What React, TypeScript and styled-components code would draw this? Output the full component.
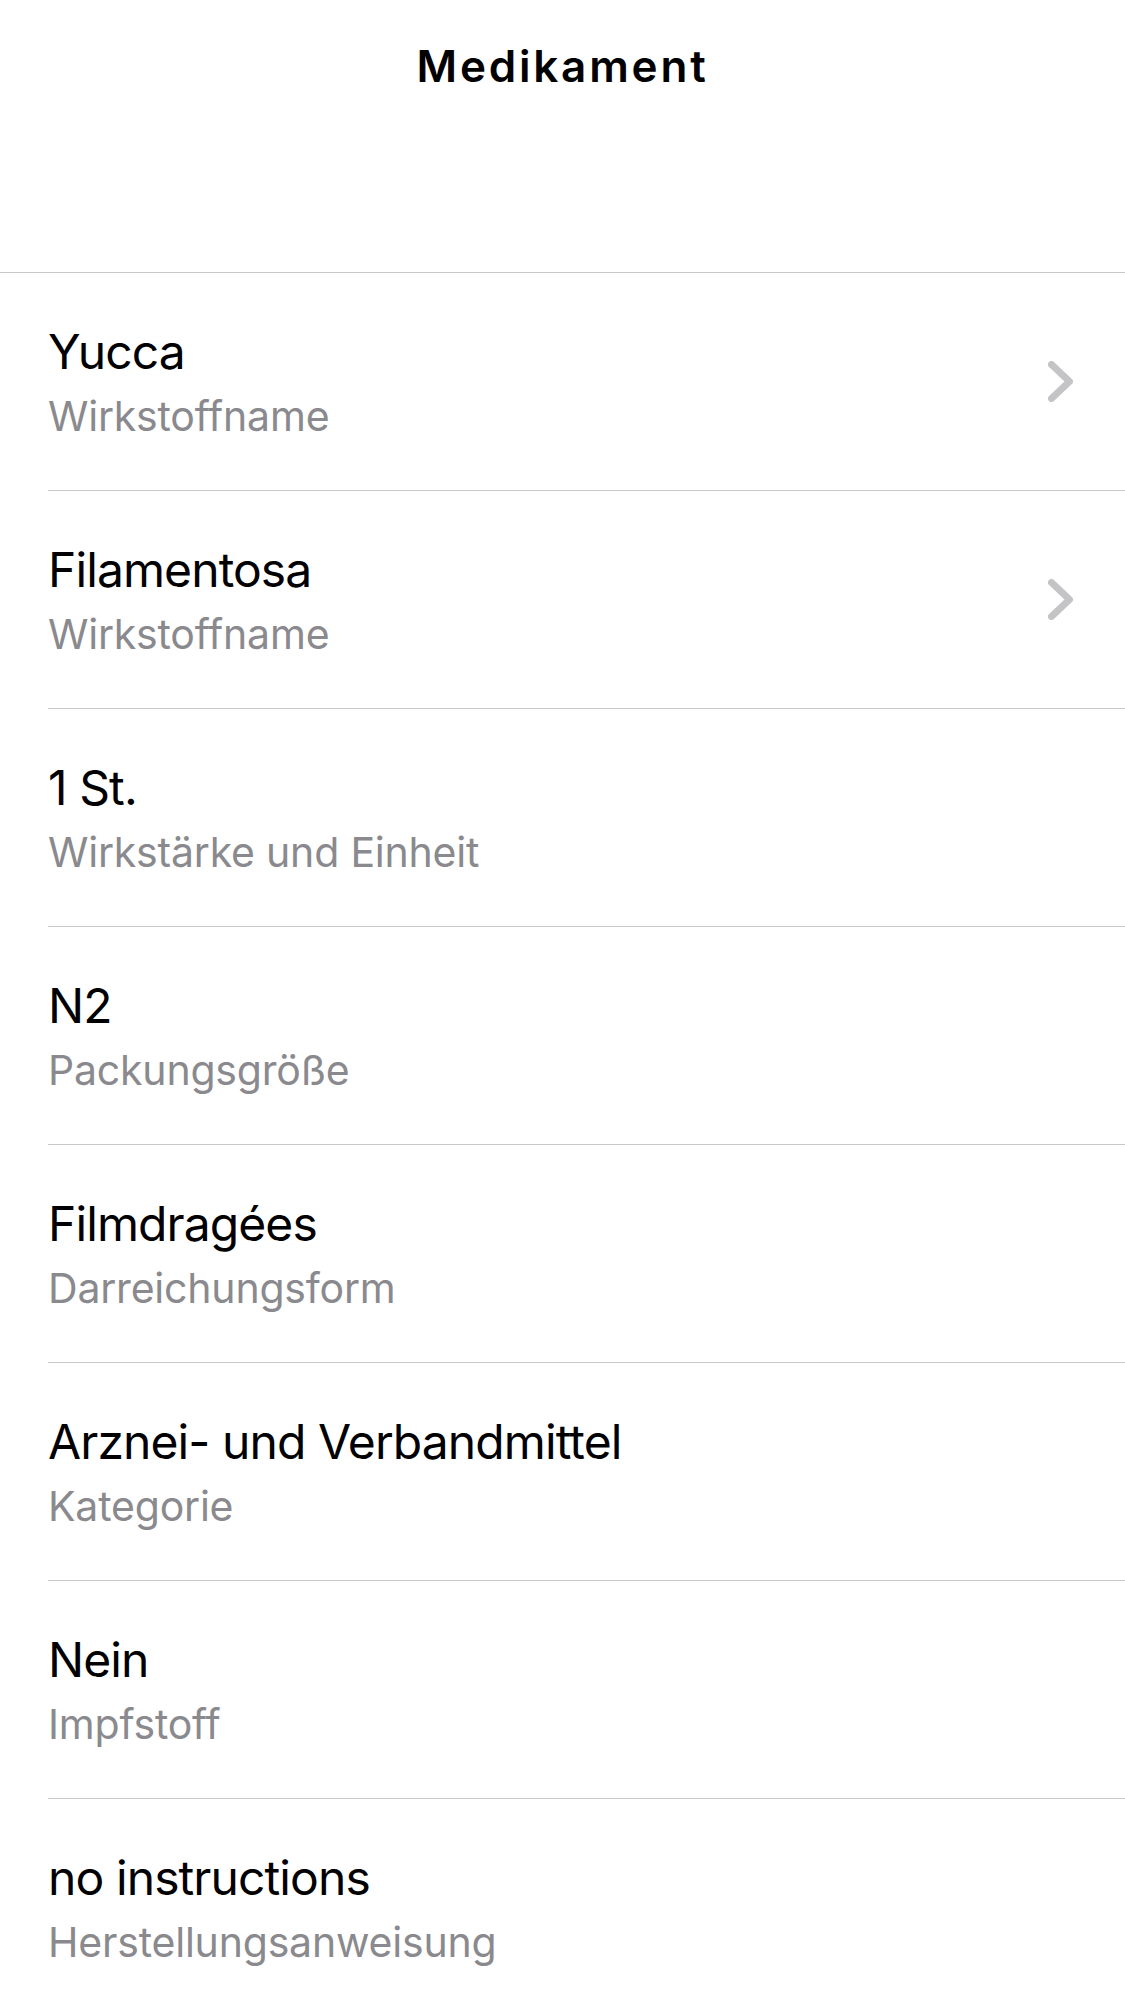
import React from "react";
import styled, { createGlobalStyle } from "styled-components";

const GlobalStyle = createGlobalStyle`
  html, body {
    margin: 0;
    padding: 0;
    background: #ffffff;
  }
  body {
    font-family: Inter, "Noto Sans", "Liberation Sans", sans-serif;
    -webkit-font-smoothing: antialiased;
  }
`;

const Screen = styled.div`
  width: 1125px;
  min-height: 2001px;
  background: #ffffff;
  display: flex;
  flex-direction: column;
`;

const Header = styled.header`
  height: 272px;
  border-bottom: 1px solid #c8c7cc;
  display: flex;
  justify-content: center;
  align-items: flex-start;
`;

const Title = styled.h1`
  margin: 40px 0 0;
  font-size: 44px;
  line-height: 52px;
  font-weight: 600;
  color: #000000;
  letter-spacing: 2.8px;
`;

const List = styled.ul`
  list-style: none;
  margin: 0;
  padding: 0;
`;

const Row = styled.li`
  padding-left: 48px;
`;

const RowInner = styled.div<{ $last?: boolean }>`
  height: 217px;
  display: flex;
  align-items: center;
  border-bottom: 1px solid ${(p) => (p.$last ? "transparent" : "#c8c7cc")};
  padding-right: 52px;
`;

const TextBlock = styled.div`
  flex: 1;
  display: flex;
  flex-direction: column;
  gap: 10px;
`;

const Primary = styled.span`
  font-size: 48px;
  line-height: 58px;
  color: #000000;
  letter-spacing: -0.9px;
`;

const Secondary = styled.span`
  font-size: 41px;
  line-height: 50px;
  color: #8a8a8e;
  letter-spacing: -0.2px;
`;

const Chevron = () => (
  <svg width="25" height="41" viewBox="0 0 25 41" aria-hidden="true">
    <polyline
      points="3.5,3.5 21.5,20.5 3.5,37.5"
      fill="none"
      stroke="#c4c4c7"
      strokeWidth="7"
      strokeLinecap="round"
      strokeLinejoin="round"
    />
  </svg>
);

type Item = { value: string; label: string; link?: boolean };

const items: Item[] = [
  { value: "Yucca", label: "Wirkstoffname", link: true },
  { value: "Filamentosa", label: "Wirkstoffname", link: true },
  { value: "1 St.", label: "Wirkstärke und Einheit" },
  { value: "N2", label: "Packungsgröße" },
  { value: "Filmdragées", label: "Darreichungsform" },
  { value: "Arznei- und Verbandmittel", label: "Kategorie" },
  { value: "Nein", label: "Impfstoff" },
  { value: "no instructions", label: "Herstellungsanweisung" },
];

export default function App() {
  return (
    <Screen>
      <GlobalStyle />
      <Header>
        <Title>Medikament</Title>
      </Header>
      <List>
        {items.map((it, i) => (
          <Row key={i}>
            <RowInner $last={i === items.length - 1}>
              <TextBlock>
                <Primary>{it.value}</Primary>
                <Secondary>{it.label}</Secondary>
              </TextBlock>
              {it.link && <Chevron />}
            </RowInner>
          </Row>
        ))}
      </List>
    </Screen>
  );
}
